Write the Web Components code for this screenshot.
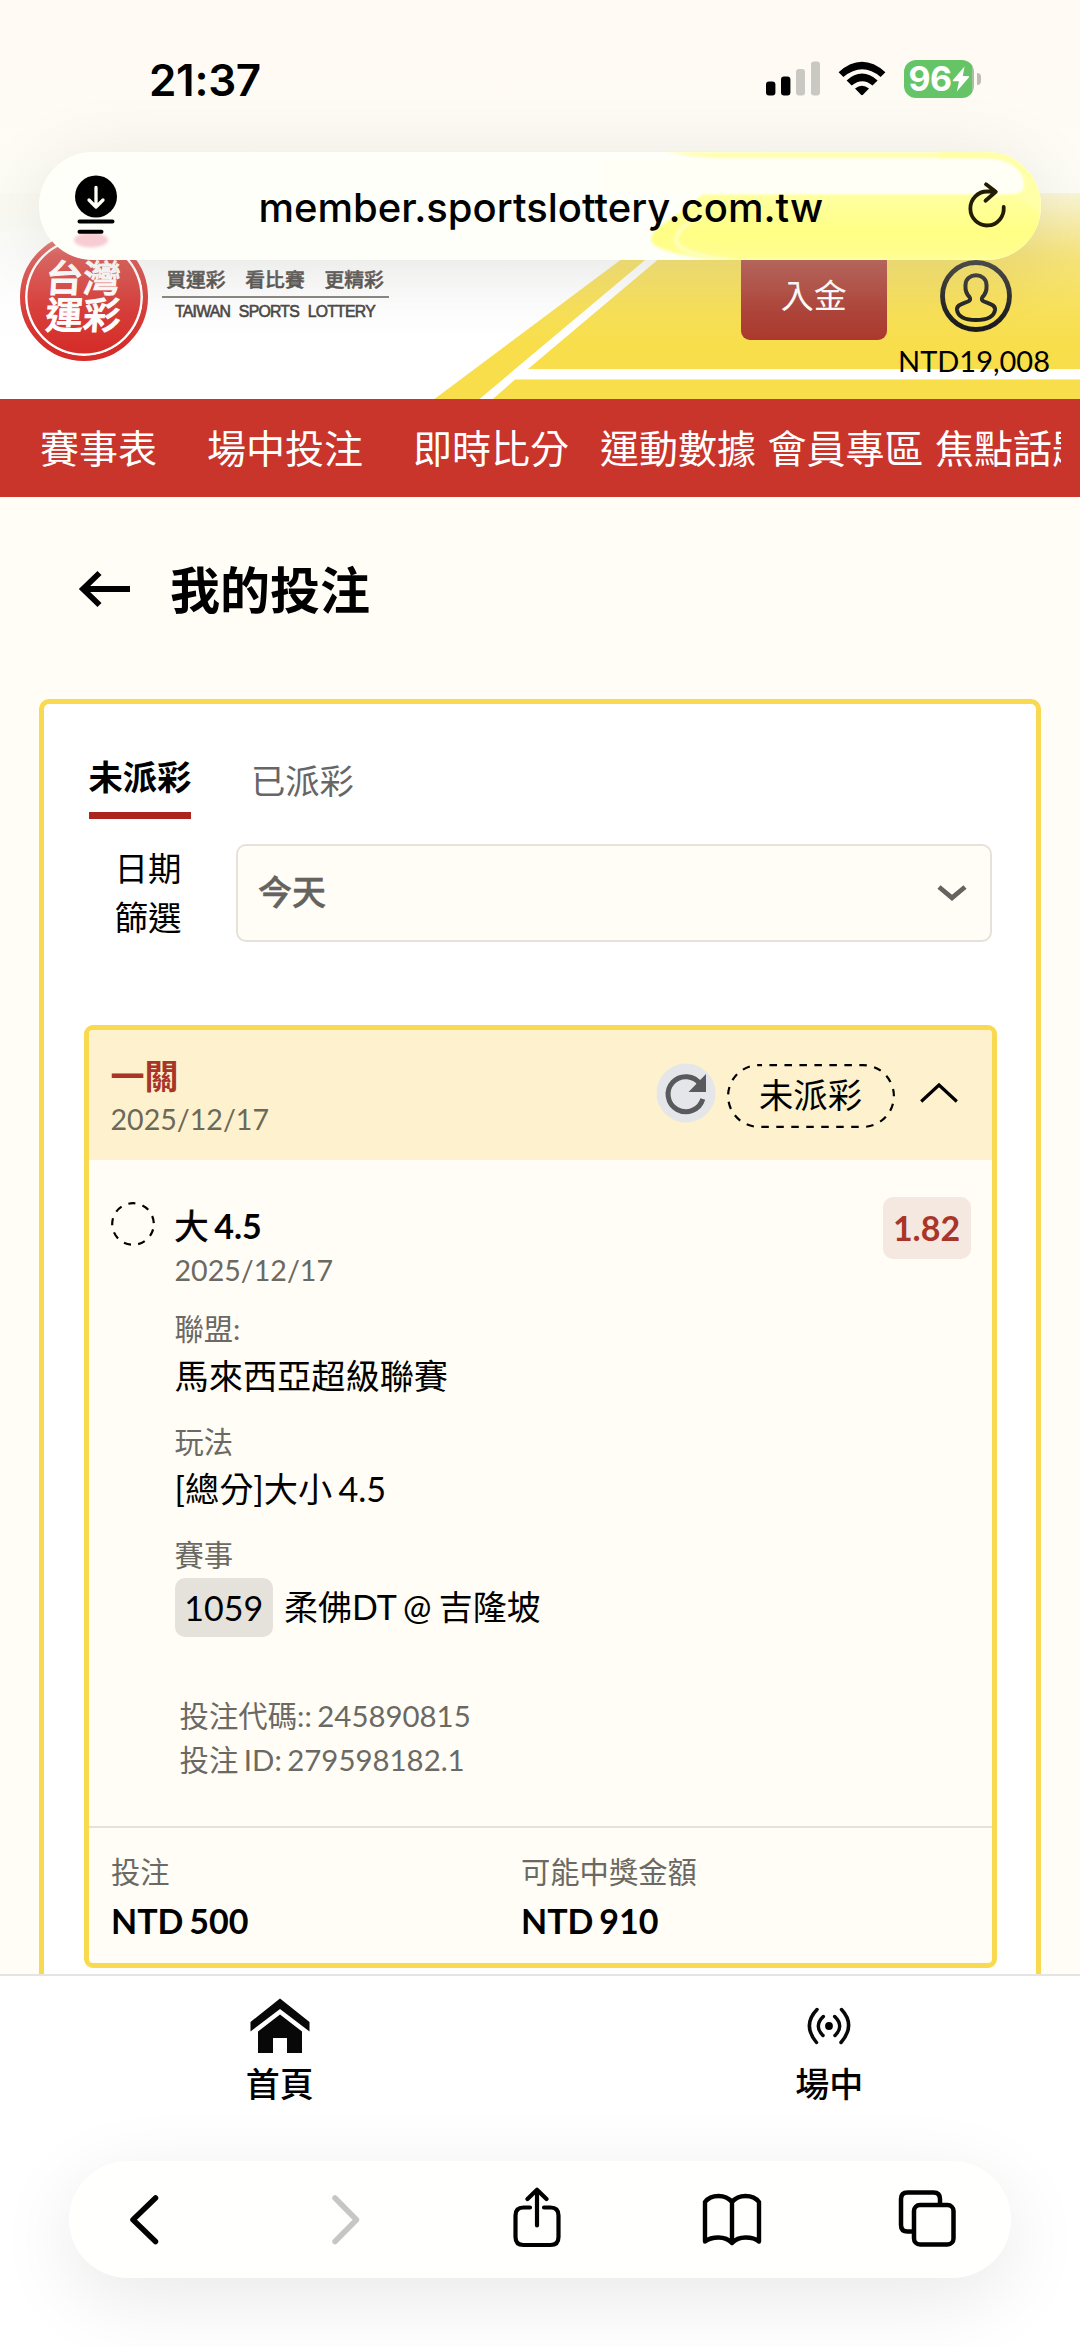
<!DOCTYPE html>
<html lang="zh-Hant">
<head>
<meta charset="utf-8">
<meta name="viewport" content="width=device-width">
<title>我的投注</title>
<style>
html,body{margin:0;padding:0}
body{width:1080px;height:2347px;overflow:hidden;background:#fffdf6;color:#000;font-family:Lato,"Noto Sans CJK TC",sans-serif}
</style>
</head>
<body>
<app-page></app-page>
<script>
const define = (name, html) => {
  const t = document.createElement('template');
  t.innerHTML = html;
  customElements.define(name, class extends HTMLElement {
    constructor() {
      super();
      this.attachShadow({ mode: 'open' }).appendChild(t.content.cloneNode(true));
    }
  });
};

const ICONS = {
  signal: [56, 36, '<rect x="1" y="20.5" width="9.4" height="14" rx="3"/><rect x="16" y="15.500" width="9.4" height="19" rx="3"/><g fill="#c9c8c3"><rect x="31" y="8" width="9" height="26.500" rx="3"/><rect x="46" y="0.500" width="9" height="34" rx="3"/></g>'],
  wifi: [48, 36, '<path d="M.6 11.200Q24-9.600 47.400 11.200L42.600 16Q24.500.600 5.400 16Z"/><path d="M8.600 19.400Q24 5.800 39.600 19.400L34.500 24.500Q24.500 15.800 13.700 24.500Z"/><path d="M17 27.600Q24 21.800 31 27.600L25.200 33.600Q24 35 22.800 33.600Z"/>'],
  bolt: [18, 26, '<path fill="#fff" d="M12.500.500.800 14.200Q.300 15.200 1.500 15.300H7L4.800 25.400 17 11.200Q17.500 10.200 16.200 10H10.800Z"/>'],
  reader: [44, 62, '<circle cx="22" cy="21.500" r="21"/><path d="M22 12.500V31M15 25 22 32 29 25" fill="none" stroke="#fffff8" stroke-width="3.300" stroke-linecap="round" stroke-linejoin="round"/><path d="M5.500 46.500H38.500M5.500 56.700H27.500" stroke="#000" stroke-width="4" stroke-linecap="round"/>'],
  reload: [42, 50, '<path d="M28.500 10.500H21.500A16.700 17 0 1 0 37.700 26M20 3.300 29.800 10.800 19.500 19.700" fill="none" stroke="#221d00" stroke-width="3.800" stroke-linecap="round" stroke-linejoin="round"/>'],
  user: [72, 72, '<g fill="none" stroke="#111" stroke-width="4.800"><circle cx="36" cy="36" r="33.500"/><path stroke-width="4" stroke-linejoin="round" d="M29.500 37C24.500 32 25.500 28 25.500 25 25.500 12 46.500 12 46.500 25 46.500 28 47.500 32 42.500 37Q40.500 40 44 41.500C50 44 55.500 45 55 50 54 56 48 60 36 60S18 56 17 50C16.500 45 22 44 28 41.500Q31.500 40 29.500 37Z"/></g>'],
  back: [54, 38, '<path d="M52 19H5M21.500 3 5 19 21.500 35" fill="none" stroke="#000" stroke-width="5.800"/>'],
  down: [30, 20, '<path d="M2 4 15 14.800 28 4" fill="none" stroke="#65635f" stroke-width="4.800"/>'],
  up: [38, 24, '<path d="M1.200 20.500 19 4 36.800 20.500" fill="none" stroke="#000" stroke-width="3.200"/>'],
  refresh: [60, 60, '<circle cx="30" cy="30" r="29.500" fill="#e5e6e9"/><path d="M44.500 21.500A17.700 17.500 0 1 0 46.800 36" fill="none" stroke="#595a5c" stroke-width="5"/><path d="M50 11V29H32.500Z" fill="#595a5c"/>'],
  ring: [46, 46, '<circle cx="23" cy="23" r="20.800" fill="none" stroke="#000" stroke-width="2.200" stroke-dasharray="7.200 7.320" stroke-dashoffset="9"/>'],
  home: [60, 56, '<path fill="#080808" d="M30 .500 59.500 24V33.500L30 11 .500 33.500V24ZM30 16.500 52 33.500V55H37V40H23V55H8V33.500Z"/>'],
  live: [48, 42, '<circle cx="24" cy="20" r="3.900"/><path d="M12 3.500Q-3 19 11.500 36.500M18.300 10.500Q8.500 20 18 29.500M29.700 10.500Q39.500 20 30 29.500M36.500 3.500Q51 19 36 36.500" fill="none" stroke="#080808" stroke-width="3.500" stroke-linecap="round"/>'],
  prev: [64, 64, '<path d="M43.500 11 21 32.800 43.500 54.500" fill="none" stroke="#000" stroke-width="5.500" stroke-linecap="round" stroke-linejoin="round"/>'],
  next: [64, 64, '<path d="M27 11 48.500 32.800 27 54.500" fill="none" stroke="#c6c6c6" stroke-width="5.500" stroke-linecap="round" stroke-linejoin="round"/>'],
  share: [64, 64, '<path d="M26 20.500H19.500Q11.500 20.500 11.500 28.500V50Q11.500 58 19.500 58H46.500Q54.500 58 54.500 50V28.500Q54.500 20.500 46.500 20.500H40M33 38.500V3.500M23.500 12 33 2.700 42.500 12" fill="none" stroke="#000" stroke-width="4.200" stroke-linecap="round" stroke-linejoin="round"/>'],
  book: [64, 64, '<path d="M33 15Q28 9 19.500 9 10.500 9 6 15V54.500Q11 50.500 19.500 50.500 28 50.500 33 56 38 50.500 46.500 50.500 55.500 50.500 60 54.500V15Q55.500 9 46.500 9 38 9 33 15V55" fill="none" stroke="#000" stroke-width="4.400" stroke-linejoin="round"/>'],
  tabs: [64, 64, '<g fill="none" stroke="#000" stroke-width="4.500"><path d="M17.500 44.500H12.500Q6 44.500 6 38V12Q6 5.500 12.500 5.500H38.500Q45 5.500 45 12V17"/><rect x="19" y="18" width="39.500" height="39.500" rx="6"/></g>']
};
customElements.define('ui-icon', class extends HTMLElement {
  connectedCallback() {
    if (this.shadowRoot) return;
    const [w, h, body] = ICONS[this.getAttribute('name')];
    this.attachShadow({ mode: 'open' }).innerHTML =
      `<style>:host{display:block;flex:none;width:${w}px;height:${h}px}svg{display:block}</style><svg width="${w}" height="${h}" viewBox="0 0 ${w} ${h}">${body}</svg>`;
  }
});

define('status-bar', `<style>
:host{display:flex;height:193px;flex:none;box-sizing:border-box;padding:51px 99px 0 149px;justify-content:space-between;align-items:flex-start;background:linear-gradient(#fffbf4 40%,#fcfcf5);font-family:Inter,sans-serif}
.t{font-size:44px;font-weight:600;line-height:58px;letter-spacing:-.3px}
.r{display:flex;align-items:flex-start;padding-top:9px}
.wifi{margin:1px 0 0 17px}
.sig{margin-top:1px}
.bat{display:flex;align-items:center;justify-content:center;box-sizing:border-box;width:70px;height:38px;margin-left:18px;border-radius:12px;background:linear-gradient(90deg,#65c566 96.500%,#a9bfa4 96.500%);color:#fff;font-size:34px;font-weight:700;letter-spacing:-.5px;line-height:38px}
.nub{width:4px;height:12px;margin:13px 0 0 3px;border-radius:0 4px 4px 0;background:#bdbcb7}
</style><span class="t">21:37</span><div class="r"><ui-icon class="sig" name="signal"></ui-icon><ui-icon class="wifi" name="wifi"></ui-icon><div class="bat"><span>96</span><ui-icon name="bolt"></ui-icon></div><i class="nub"></i></div>`);

define('url-bar', `<style>
:host{position:absolute;left:39px;top:152px;width:1001.500px;height:108px;border-radius:54px;box-shadow:0 8px 76px rgba(0,0,0,.09)}
.bar{position:relative;display:flex;align-items:center;height:108px;border-radius:54px;overflow:hidden;background:#fffffa;font-family:Inter,sans-serif}
.glass{position:absolute;inset:0}
.row{position:relative;display:flex;flex:1;align-items:center;justify-content:space-between;padding:0 32px 0 35px;height:108px}
.u{font-size:40px;font-weight:500;letter-spacing:0;line-height:50px;margin:4px 3px 0 0;white-space:nowrap}
</style><div class="bar"><svg class="glass" width="1002" height="108" viewBox="0 0 1002 108">
<defs><filter id="s" x="-10%" y="-30%" width="120%" height="160%"><feGaussianBlur stdDeviation="1.800"/></filter>
<linearGradient id="y" x1="0" y1="0" x2="0" y2="1"><stop offset="0" stop-color="#ffffac"/><stop offset=".45" stop-color="#ffff9c"/><stop offset=".75" stop-color="#fffe84"/><stop offset="1" stop-color="#fffe92"/></linearGradient></defs>
<ellipse cx="52" cy="88" rx="17" ry="7.500" fill="#f7cdd3" filter="url(#s)"/>
<path d="M625 0H1002V108H700C650 108 612 97 612 88 612 72 645 64 664 41L1002 41V6H690Q660 6 625 0Z" fill="url(#y)" filter="url(#s)"/>
<path d="M900 6H950Q984 10 984 34 984 41 974 42L1002 60V0H900Z" fill="#ffffa8" filter="url(#s)"/>
<path d="M560 8H930Q984 8 984 33 984 42 966 42H560Z" fill="#fffff6" filter="url(#s)"/>
<path d="M662 62C645 73 637 80 637 89 639 98 655 104 690 108" fill="none" stroke="#ffffc2" stroke-width="4" filter="url(#s)"/>
</svg><div class="row"><ui-icon name="reader"></ui-icon><span class="u">member.sportslottery.com.tw</span><ui-icon name="reload"></ui-icon></div></div>`);

define('site-logo', `<style>
:host{display:flex;align-items:flex-start}
.seal{display:flex;flex-direction:column;align-items:center;justify-content:center;box-sizing:border-box;width:128px;height:128px;border-radius:50%;background:#d52d29;border:5.500px solid #d52d29;box-shadow:inset 0 0 0 2.500px #fff;color:#fff;font:500 37.500px/37px "Noto Sans CJK TC",sans-serif;-webkit-text-stroke:1px #fff;padding-bottom:5px}
.seal span{transform:skewX(-4deg);white-space:nowrap}
.txt{margin:34px 0 0 14px;width:227px;color:#3c3734}
.cn{font:500 19.800px/24px "Noto Sans CJK TC",sans-serif;-webkit-text-stroke:.5px #3c3734;text-align:center;white-space:nowrap;padding-bottom:5px;border-bottom:2px solid #7c7873}
.en{font:400 15.800px/20px "Liberation Sans",sans-serif;-webkit-text-stroke:.6px #3c3734;text-align:center;white-space:nowrap;margin-top:4px;word-spacing:5px;letter-spacing:-.75px}
</style><div class="seal"><span>台灣</span><span>運彩</span></div><div class="txt"><div class="cn">買運彩　看比賽　更精彩</div><div class="en">TAIWAN SPORTS LOTTERY</div></div>`);

define('site-header', `<style>
:host{display:block;height:206px;flex:none;background:#fff;position:relative}
.bg{position:absolute;inset:0;display:block}
.haze{position:absolute;inset:0 0 50px 0;background:linear-gradient(rgba(249,249,238,.85),rgba(240,240,236,.3) 40%,rgba(242,242,242,.09) 75%,rgba(245,245,245,0))}
.row{position:relative;display:flex;height:206px;padding:39.500px 27px 0 19.500px;box-sizing:border-box;align-items:flex-start}
.pay{display:flex;align-items:center;justify-content:center;width:147.500px;height:88px;margin:19.500px 0 0 352px;border-radius:9px;background:#a93529;color:#fff;font-size:33px;font-weight:400;line-height:40px}
.pay span{margin-bottom:2px}
.me{display:flex;flex-direction:column;align-items:center;margin:27px 0 0 12px;width:154px}
.me span{font-size:29px;line-height:36px;margin:11px 4px 0 0;white-space:nowrap}
</style><svg class="bg" width="1080" height="206" viewBox="0 0 1080 206"><path fill="#f8de4a" d="M710 0H1080V206H434.500Z"/><path fill="#fff" d="M725 0 479.500 206H493L515 186.500H1080V176H528L737 0Z"/></svg>
<div class="row"><site-logo></site-logo><div class="pay"><span>入金</span></div><div class="me"><ui-icon name="user"></ui-icon><span>NTD19,008</span></div></div><div class="haze"></div>`);

define('site-nav', `<style>
:host{display:flex;flex:none;height:98px;background:#c9342b;color:#fff;padding:0 19px 0 40px;position:relative;z-index:1}
.v{display:flex;flex:1;min-width:0;overflow:hidden;align-items:center;font-size:39px;line-height:60px;white-space:nowrap}
span{flex:none;margin-right:50px}.b{margin-right:31px}.c{margin-right:11.500px}
</style><div class="v"><span>賽事表</span><span>場中投注</span><span class="b">即時比分</span><span class="c">運動數據</span><span class="c">會員專區</span><span>焦點話題</span></div>`);

define('page-title', `<style>
:host{display:flex;align-items:center;height:185px;padding-left:78px}
ui-icon{margin-top:-2px}
h1{margin:0 0 0 38px;font-size:50px;line-height:70px;font-weight:700}
</style><ui-icon name="back"></ui-icon><h1><slot></slot></h1>`);

define('bet-tabs', `<style>
:host{display:flex;align-items:flex-start;gap:59.500px;margin-left:5px;font-size:34.300px;line-height:50px}
.on{font-weight:700;padding-bottom:10px;border-bottom:7px solid #ac2420}
.off{color:#666;padding-top:4px}
</style><div class="on">未派彩</div><div class="off">已派彩</div>`);

define('date-filter', `<style>
:host{display:flex;margin:25px 0 0 30px}
.l{width:68px;font-size:33.500px;line-height:49px;text-align:right}
.s{display:flex;align-items:center;justify-content:space-between;box-sizing:border-box;width:755.500px;height:98px;margin-left:54.500px;padding:0 23px 0 20px;border:2px solid #e5e2dc;border-radius:10px;background:#fffdf6;color:#65635f;font-size:34px;font-weight:500;line-height:50px;-webkit-text-stroke:.5px #65635f}
.s span{margin-bottom:3px}
</style><div class="l">日期<br>篩選</div><div class="s"><span>今天</span><ui-icon name="down"></ui-icon></div>`);

define('bet-field', `<style>
:host{display:block;margin-bottom:19px}
.k{font-size:29.300px;line-height:44px;color:#6b6963}
.v{font-size:34.200px;line-height:50px;white-space:nowrap}
</style><div class="k"><slot name="label"></slot></div><div class="v"><slot></slot></div>`);

define('status-pill', `<style>
:host{display:flex;position:relative;align-items:center;justify-content:center;width:168px;height:64px;font-size:34.300px;line-height:50px}
svg{position:absolute;inset:0}
span{margin-bottom:3px}
</style><svg width="168" height="64" viewBox="0 0 168 64"><rect x="1.100" y="1.100" width="165.800" height="61.800" rx="30.900" fill="none" stroke="#000" stroke-width="2.200" stroke-dasharray="7.500 7.480" stroke-dashoffset="4.500"/></svg><span><slot></slot></span>`);

define('bet-card', `<style>
:host{display:block;box-sizing:border-box;width:913px;margin-top:83px;border:5px solid #f9d950;border-radius:9px;overflow:hidden;background:#fffdf6;word-spacing:-2.500px}
header{display:flex;height:130px;background:#fdf2cd}
.h{flex:1;padding:25px 0 0 22px}
.n{font-size:34px;line-height:42px;font-weight:700;color:#a93529}
.d{font-size:28.600px;line-height:44px;color:#6b6963}
header .d{color:#6c685a}
.a{display:flex;align-items:flex-start;padding:33px 34px 0 0}
.a status-pill{margin:1px 0 0 11px}
.up{margin:18px 0 0 25px}
.leg{display:flex;height:666px;box-sizing:border-box;padding:0 21px 0 21px}
.ring{margin-top:41px}
.m{flex:1;padding:44px 0 0 19px}
.t{font-size:34px;line-height:44px;font-weight:700;word-spacing:-2.500px}
.t i{font-style:normal;font-weight:400;-webkit-text-stroke:.7px #000}
.m bet-field:first-of-type{margin-top:15px}
.g{display:flex;align-items:center;margin:-18px 0 0 0;font-size:34px;line-height:56px}
.g b{font-weight:400;height:59px;line-height:59px;width:98.500px;text-align:center;background:#e5e2dc;border-radius:10px;margin-right:11px}
.g span{margin-top:-2px;word-spacing:-1.500px}
.c{margin:57px 0 0 5px;font-size:29.400px;line-height:44px;color:#6b6963;word-spacing:-2px}
.o{flex:none;width:88px;height:62px;margin-top:37px;border-radius:10px;background:#f5e8e0;color:#a93529;font-weight:700;font-size:34px;line-height:62px;text-align:center}
.ev{font-size:29.300px;line-height:44px;color:#6b6963;margin-bottom:19px}
footer{display:flex;height:137px;box-sizing:border-box;border-top:2px solid #e5e2dc;padding:22px 0 0 22.500px}
footer div{width:410px}
footer span{display:block;font-size:29.300px;line-height:44px;color:#6b6963}
footer b{display:block;font-size:34px;line-height:54px}
</style>
<header><div class="h"><div class="n">一關</div><div class="d">2025/12/17</div></div><div class="a"><ui-icon name="refresh"></ui-icon><status-pill>未派彩</status-pill><ui-icon class="up" name="up"></ui-icon></div></header>
<section class="leg"><ui-icon class="ring" name="ring"></ui-icon><div class="m"><div class="t"><i>大</i> 4.5</div><div class="d">2025/12/17</div>
<bet-field><span slot="label">聯盟:</span>馬來西亞超級聯賽</bet-field>
<bet-field><span slot="label">玩法</span>[總分]大小 4.5</bet-field>
<div class="ev">賽事</div><div class="g"><b>1059</b><span>柔佛DT @ 吉隆坡</span></div>
<div class="c">投注代碼:: 245890815<br>投注 ID: 279598182.1</div></div><div class="o">1.82</div></section>
<footer><div><span>投注</span><b>NTD 500</b></div><div><span>可能中獎金額</span><b>NTD 910</b></div></footer>`);

define('bet-panel', `<style>
:host{display:block;box-sizing:border-box;width:1001.500px;height:1300px;margin:17px 0 0 39px;padding:48px 0 0 39.500px;border:5px solid #f9d950;border-radius:10px;background:#fff}
</style><bet-tabs></bet-tabs><date-filter></date-filter><bet-card></bet-card>`);

define('tab-item', `<style>
:host{display:flex;flex:none;flex-direction:column;align-items:center;width:549.500px;font-size:34px;font-weight:500;line-height:50px}
.i{display:flex;height:83px;padding-top:var(--top,22px);box-sizing:border-box}
</style><div class="i"><slot name="icon"></slot></div><span><slot></slot></span>`);

define('safari-toolbar', `<style>
:host{display:flex;box-sizing:border-box;width:942px;height:117.500px;margin:51.500px 0 0 69px;padding:0 52px 0 43px;align-items:center;justify-content:space-between;border-radius:59px;background:#fffffd;box-shadow:0 20px 80px rgba(0,0,0,.09)}
</style><ui-icon name="prev"></ui-icon><ui-icon name="next"></ui-icon><ui-icon name="share"></ui-icon><ui-icon name="book"></ui-icon><ui-icon name="tabs"></ui-icon>`);

define('bottom-bar', `<style>
:host{display:block;flex:none;box-sizing:border-box;height:373px;border-top:2px solid #e4e4e3;background:#fff;overflow:hidden}
nav{display:flex;margin-left:5px}
.l{--top:30px}
</style><nav><tab-item><ui-icon slot="icon" name="home"></ui-icon>首頁</tab-item><tab-item class="l"><ui-icon slot="icon" name="live"></ui-icon>場中</tab-item></nav><safari-toolbar></safari-toolbar>`);

define('app-page', `<style>
:host{display:flex;flex-direction:column;position:relative;width:1080px;height:2347px;overflow:hidden}
main{height:1477px;flex:none;overflow:hidden;background:#fffdf6}
</style><status-bar></status-bar><site-header></site-header><site-nav></site-nav><main><page-title>我的投注</page-title><bet-panel></bet-panel></main><bottom-bar></bottom-bar><url-bar></url-bar>`);
</script>
</body>
</html>
